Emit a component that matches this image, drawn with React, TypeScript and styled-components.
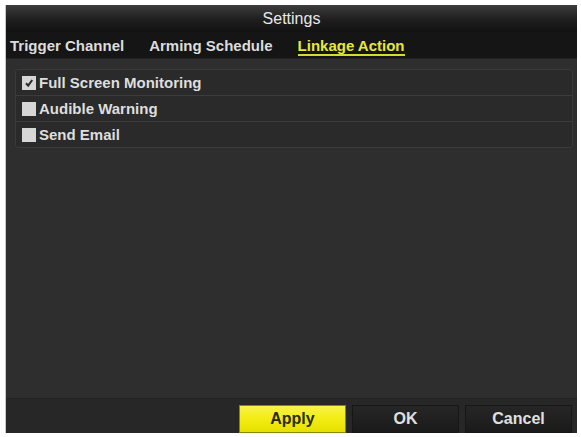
import React from "react";
import styled, { createGlobalStyle } from "styled-components";

const GlobalStyle = createGlobalStyle`
  html, body {
    margin: 0;
    padding: 0;
    background: #ffffff;
    font-family: "Liberation Sans", Arial, sans-serif;
  }
`;

const Page = styled.div`
  padding: 5px 4px 4px 6px;
`;

const Window = styled.div`
  width: 571px;
  height: 428px;
  display: flex;
  flex-direction: column;
  background: #2e2e2e;
  box-shadow: -1px 0 0 #c8c8c8;
`;

const TitleBar = styled.div`
  height: 27px;
  display: flex;
  align-items: center;
  justify-content: center;
  background: linear-gradient(#3c3c3c, #1e1e1e 55%, #121212);
  color: #e8e8e8;
  font-size: 16px;
`;

const TabBar = styled.div`
  height: 26px;
  display: flex;
  align-items: center;
  gap: 25px;
  padding-left: 4px;
  background: #151515;
  border-bottom: 1px solid #242424;
`;

const Tab = styled.span<{ $active?: boolean }>`
  font-size: 15px;
  font-weight: bold;
  line-height: 17px;
  padding: 2px 0 0 0;
  color: ${(p) => (p.$active ? "#e6e83a" : "#dcdcdc")};
  border-bottom: 2px solid ${(p) => (p.$active ? "#d8da30" : "transparent")};
`;

const Content = styled.div`
  flex: 1;
  padding: 10px 4px 0 9px;
`;

const List = styled.div`
  border: 1px solid #3a3a3a;
  border-radius: 3px;
  background: #2a2a2a;
`;

const Row = styled.label`
  height: 25px;
  display: flex;
  align-items: center;
  gap: 3px;
  padding-left: 6px;
  color: #dedede;
  font-size: 15px;
  font-weight: bold;
  & + & {
    border-top: 1px solid #3c3c3c;
  }
`;

const Box = styled.span`
  width: 14px;
  height: 14px;
  background: #d6d6d6;
  display: flex;
  align-items: center;
  justify-content: center;
`;

const BottomBar = styled.div`
  height: 35px;
  display: flex;
  justify-content: flex-end;
  align-items: flex-start;
  gap: 6px;
  padding: 6px 5px 0 0;
  box-sizing: border-box;
  background: #272727;
  border-top: 1px solid #232323;
`;

const Button = styled.button<{ $primary?: boolean }>`
  width: 107px;
  height: 28px;
  border: 1px solid ${(p) => (p.$primary ? "#8a8700" : "#161616")};
  background: ${(p) =>
    p.$primary
      ? "linear-gradient(#f8f34a, #f2ec12 50%, #e6e000)"
      : "linear-gradient(#262626, #1a1a1a)"};
  color: ${(p) => (p.$primary ? "#2a2a10" : "#e0e0e0")};
  font-family: "Liberation Sans", Arial, sans-serif;
  font-size: 16px;
  font-weight: bold;
  padding: 0;
`;

const Check = () => (
  <svg width="10" height="10" viewBox="0 0 10 10">
    <path d="M2 5.2 L4.2 7.6 L8.2 2" stroke="#2a2a2a" strokeWidth="2" fill="none" />
  </svg>
);

const actions = [
  { name: "Full Screen Monitoring", checked: true },
  { name: "Audible Warning", checked: false },
  { name: "Send Email", checked: false },
];

const App: React.FC = () => {
  return (
    <Page>
      <GlobalStyle />
      <Window>
        <TitleBar>Settings</TitleBar>
        <TabBar>
          <Tab>Trigger Channel</Tab>
          <Tab>Arming Schedule</Tab>
          <Tab $active>Linkage Action</Tab>
        </TabBar>
        <Content>
          <List>
            {actions.map((a) => (
              <Row key={a.name}>
                <Box>{a.checked && <Check />}</Box>
                {a.name}
              </Row>
            ))}
          </List>
        </Content>
        <BottomBar>
          <Button $primary>Apply</Button>
          <Button>OK</Button>
          <Button>Cancel</Button>
        </BottomBar>
      </Window>
    </Page>
  );
};

export default App;
